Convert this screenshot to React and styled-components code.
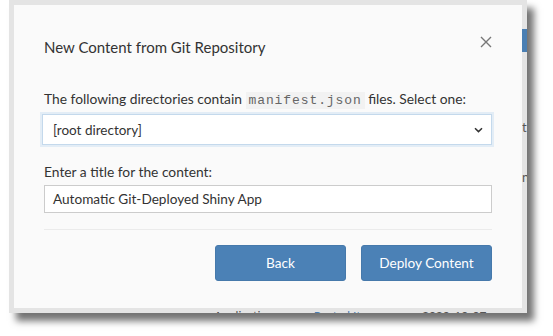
import React from "react";
import styled, { createGlobalStyle } from "styled-components";

const GlobalStyle = createGlobalStyle`
  html, body {
    margin: 0;
    padding: 0;
    background: #ffffff;
  }
  body {
    font-family: Lato, "Open Sans", sans-serif;
    color: #333;
  }
`;

const Stage = styled.div`
  width: 553px;
  height: 336px;
  padding-left: 9px;
  box-sizing: border-box;
`;

const Frame = styled.div`
  position: relative;
  width: 518px;
  height: 313px;
  background: #e4e4e4;
  box-shadow: 7px 8px 7px rgba(0, 0, 0, 0.55);
  padding: 5px;
  box-sizing: border-box;
  overflow: hidden;
`;

const PageButton = styled.div`
  position: absolute;
  right: 0;
  top: 29px;
  width: 6px;
  height: 23px;
  background: #4a7fb3;
`;

const PageLetter = styled.span`
  position: absolute;
  left: 513px;
  top: ${(p) => p.top}px;
  font-size: 13px;
  color: #555;
`;

const PageFooter = styled.div`
  position: absolute;
  left: 205px;
  bottom: -10px;
  display: flex;
  gap: 40px;
  font-size: 12px;
  color: #555;
  span.link {
    color: #4a7fb3;
  }
`;

const Dialog = styled.div`
  position: relative;
  z-index: 1;
  width: 508px;
  height: 303px;
  background: #fafafa;
  box-sizing: border-box;
  padding: 0 30px;
  display: flex;
  flex-direction: column;
`;

const Header = styled.div`
  display: flex;
  align-items: center;
  justify-content: space-between;
  height: 72px;
  padding-top: 12px;
  margin-bottom: 13px;
  box-sizing: border-box;
`;

const Title = styled.h4`
  margin: 0;
  font-size: 15px;
  font-weight: 400;
  color: #333;
`;

const Close = styled.button`
  border: 0;
  background: none;
  padding: 0;
  margin-right: -2px;
  margin-top: -10px;
  width: 16px;
  height: 16px;
  display: flex;
  align-items: center;
  justify-content: center;
  cursor: pointer;
`;

const Label = styled.p`
  margin: 0 0 4px 0;
  font-size: 13.8px;
  line-height: 18px;
  color: #333;
  white-space: nowrap;
`;

const Code = styled.code`
  font-family: "Liberation Mono", "DejaVu Sans Mono", monospace;
  font-size: 13px;
  letter-spacing: 0.9px;
  color: #666;
  background: #f2f2f2;
  padding: 1px 3px;
`;

const SelectBox = styled.div`
  height: 31px;
  margin-left: -2px;
  border: 1px solid #c4d9ec;
  box-shadow: 0 0 0 2px #e3edf6;
  background: #ffffff;
  display: flex;
  align-items: center;
  justify-content: space-between;
  padding: 0 8px 0 10px;
  box-sizing: border-box;
  font-size: 13.5px;
  color: #333;
  margin-bottom: 18px;
`;

const Field = styled.div`
  height: 28px;
  border: 1px solid #cccccc;
  background: #ffffff;
  display: flex;
  align-items: center;
  padding: 0 8px;
  box-sizing: border-box;
  font-size: 13.6px;
  color: #333;
`;

const Divider = styled.hr`
  border: 0;
  border-top: 1px solid #ebebeb;
  margin: 16px 0 15px 0;
`;

const Footer = styled.div`
  display: flex;
  justify-content: flex-end;
  gap: 15px;
`;

const Button = styled.button`
  width: 131px;
  height: 36px;
  border: 1px solid #4679ab;
  border-radius: 3px;
  background: #4b81b6;
  color: #ffffff;
  font-family: Lato, "Open Sans", sans-serif;
  font-size: 13.6px;
  cursor: pointer;
`;

const Chevron = () => (
  <svg width="9" height="6" viewBox="0 0 9 6">
    <path d="M1 1.2 L4.5 4.6 L8 1.2" fill="none" stroke="#333" strokeWidth="1.5" />
  </svg>
);

const CloseIcon = () => (
  <svg width="12" height="12" viewBox="0 0 12 12">
    <path d="M1 1 L11 11 M11 1 L1 11" stroke="#777" strokeWidth="1.4" />
  </svg>
);

export default function App() {
  return (
    <Stage>
      <GlobalStyle />
      <Frame>
        <PageButton />
        <PageLetter top={119}>t</PageLetter>
        <PageLetter top={169}>n</PageLetter>
        <PageFooter>
          <span>Application</span>
          <span className="link">Posted Items</span>
          <span>2020-10-07</span>
        </PageFooter>
        <Dialog>
          <Header>
            <Title>New Content from Git Repository</Title>
            <Close aria-label="Close">
              <CloseIcon />
            </Close>
          </Header>
          <Label>
            The following directories contain <Code>manifest.json</Code> files.
            Select one:
          </Label>
          <SelectBox>
            <span>[root directory]</span>
            <Chevron />
          </SelectBox>
          <Label>Enter a title for the content:</Label>
          <Field>Automatic Git-Deployed Shiny App</Field>
          <Divider />
          <Footer>
            <Button>Back</Button>
            <Button>Deploy Content</Button>
          </Footer>
        </Dialog>
      </Frame>
    </Stage>
  );
}
